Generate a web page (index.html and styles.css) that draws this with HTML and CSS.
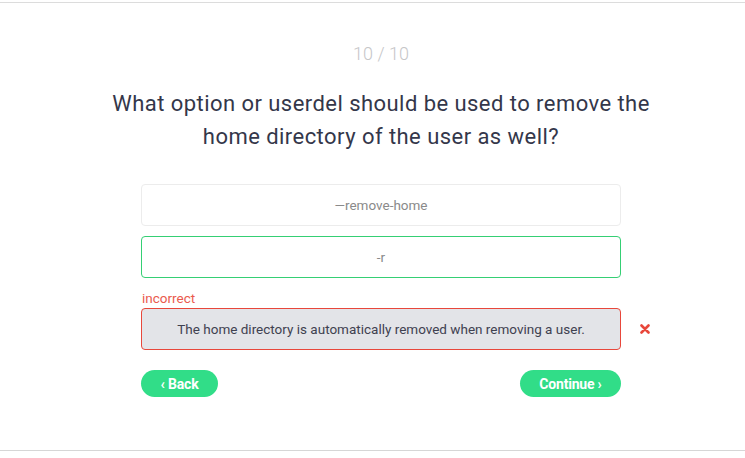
FILE: index.html
```html
<!DOCTYPE html>
<html>
<head>
<meta charset="utf-8">
<link rel="stylesheet" href="styles.css">
</head>
<body>
<div class="frame">
  <div class="column">
    <div class="counter">10 / 10</div>
    <h1 class="question">What option or userdel should be used to remove the home directory of the user as well?</h1>
    <div class="options">
      <div class="option">—remove-home</div>
      <div class="option correct">-r</div>
      <div class="wrong-group">
        <div class="label">incorrect</div>
        <div class="option-row">
          <div class="option wrong">The home directory is automatically removed when removing a user.</div>
          <svg class="xmark" width="10" height="10" viewBox="0 0 10 10"><path d="M1.5 1.5 L8.5 8.5 M8.5 1.5 L1.5 8.5" stroke="#e8473b" stroke-width="2.6" stroke-linecap="round"/></svg>
        </div>
      </div>
    </div>
    <div class="nav">
      <button class="btn">‹ Back</button>
      <button class="btn">Continue ›</button>
    </div>
  </div>
</div>
</body>
</html>
```
FILE: styles.css
```css
html, body { margin: 0; padding: 0; background: #fff; }
body { font-family: Roboto, "Liberation Sans", sans-serif; overflow: hidden; }
.frame {
  margin-top: 2px;
  height: 447px;
  border-top: 1px solid #dcdcdc;
  border-bottom: 1px solid #d6d6d6;
  padding-left: 141px;
  box-sizing: content-box;
}
.column { width: 480px; display: flex; flex-direction: column; align-items: stretch; }
.counter {
  margin-top: 40px;
  text-align: center;
  font-size: 18px;
  line-height: 22px;
  color: #c6c6c8;
  font-weight: 300;
}
.question {
  margin: 22px -60px 0;
  text-align: center;
  font-size: 22px;
  line-height: 33px;
  font-weight: 400;
  color: #34374a;
  letter-spacing: 0.45px;
}
.options { margin-top: 31px; display: flex; flex-direction: column; gap: 10px; }
.option {
  height: 42px;
  box-sizing: border-box;
  border: 1px solid #ececec;
  border-radius: 4px;
  display: flex;
  align-items: center;
  justify-content: center;
  font-size: 13.5px;
  color: #8a8a8a;
}
.option.correct { border-color: #35cf74; }
.wrong-group { display: flex; flex-direction: column; margin-top: 2px; }
.label { font-size: 13.5px; line-height: 16px; color: #ea5a4e; margin-left: 1px; margin-bottom: 2px; }
.option-row { display: flex; align-items: center; width: 515px; }
.option.wrong {
  width: 480px;
  flex: none;
  background: #e3e4e8;
  border-color: #e8473b;
  color: #3f4150;
}
.xmark { margin-left: 19px; }
.nav { margin-top: 20px; display: flex; justify-content: space-between; }
.btn {
  border: none;
  background: #31dd88;
  color: #fff;
  font-family: Roboto, sans-serif;
  font-weight: 700;
  font-size: 14px;
  height: 27px;
  border-radius: 14px;
  padding: 0 19px;
  letter-spacing: -0.2px;
}
.btn:first-child { width: 77px; }
.btn:last-child { width: 101px; }
```
